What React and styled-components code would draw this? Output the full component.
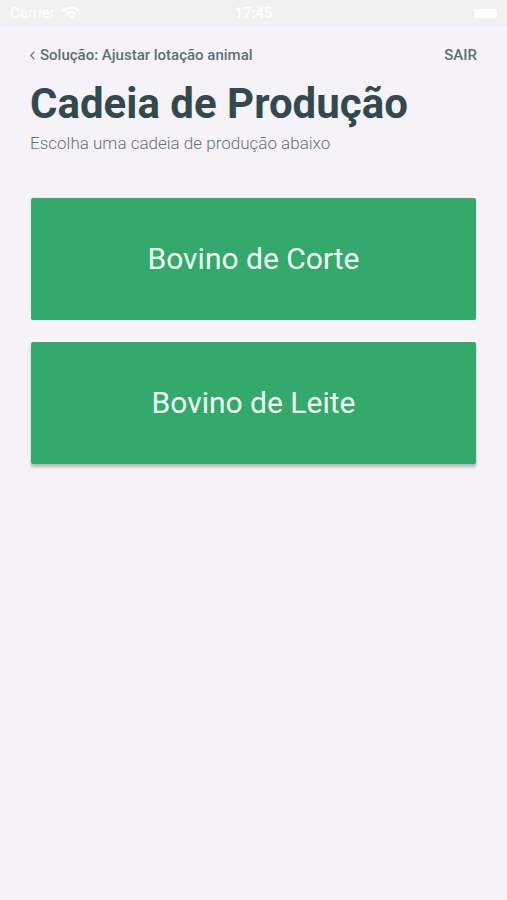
import styled, { createGlobalStyle } from "styled-components";

const chains = [
  { id: "corte", label: "Bovino de Corte", raised: false },
  { id: "leite", label: "Bovino de Leite", raised: true },
];

const App = () => {
  return (
    <>
      <GlobalStyle />
      <Screen>
        <StatusBar>
          <Carrier>
            Carrier
            <WifiIcon />
          </Carrier>
          <Clock>17:45</Clock>
          <Battery />
        </StatusBar>
        <Content>
          <NavRow>
            <NavLink href="#solucao">
              <BackIcon />
              Solução: Ajustar lotação animal
            </NavLink>
            <NavLink href="#sair">SAIR</NavLink>
          </NavRow>
          <Title>Cadeia de Produção</Title>
          <Subtitle>Escolha uma cadeia de produção abaixo</Subtitle>
          <ChainList>
            {chains.map((chain) => (
              <ChainButton key={chain.id} type="button" $raised={chain.raised}>
                {chain.label}
              </ChainButton>
            ))}
          </ChainList>
        </Content>
      </Screen>
    </>
  );
};

const WifiIcon = () => (
  <svg width="18" height="14" viewBox="0 0 18 14" aria-hidden="true">
    <g fill="none" stroke="#ffffff" strokeWidth="2.6">
      <path d="M1 5.2C5.4 0.6 12.6 0.6 17 5.2" />
      <path d="M4 8.4C6.8 5.6 11.2 5.6 14 8.4" />
    </g>
    <path d="M9 13.4L6.2 10.4C7.8 8.9 10.2 8.9 11.8 10.4Z" fill="#ffffff" />
  </svg>
);

const BackIcon = () => (
  <svg width="5" height="9" viewBox="0 0 5 9" aria-hidden="true">
    <path
      d="M4.4 0.6L0.8 4.5L4.4 8.4"
      fill="none"
      stroke="#5f7377"
      strokeWidth="1.2"
    />
  </svg>
);

const GlobalStyle = createGlobalStyle`
  * {
    box-sizing: border-box;
  }

  body {
    margin: 0;
    background: #f5f3f8;
    font-family: Roboto, "Liberation Sans", sans-serif;
  }
`;

const Screen = styled.div`
  min-height: 100vh;
  background: #f5f3f8;
`;

const StatusBar = styled.header`
  display: grid;
  grid-template-columns: 1fr auto 1fr;
  align-items: center;
  height: 26px;
  padding: 0 10px;
  background: #f1f1f1;
  color: #ffffff;
  font-size: 15px;
  line-height: 20px;
`;

const Carrier = styled.div`
  display: flex;
  align-items: center;
  gap: 7px;
`;

const Clock = styled.div`
  font-weight: 500;
`;

const Battery = styled.div`
  justify-self: end;
  width: 23px;
  height: 9px;
  border-radius: 2px;
  background: #ffffff;
`;

const Content = styled.main`
  padding: 19px 30px 30px;
`;

const NavRow = styled.nav`
  display: flex;
  justify-content: space-between;
  align-items: center;
`;

const NavLink = styled.a`
  display: flex;
  align-items: center;
  gap: 5px;
  color: #5a7175;
  font-size: 15px;
  font-weight: 500;
  line-height: 20px;
  text-decoration: none;
`;

const Title = styled.h1`
  margin: 14px 0 0;
  color: #34494e;
  font-size: 42px;
  font-weight: 700;
  line-height: 50px;
`;

const Subtitle = styled.p`
  margin: 4px 0 0;
  color: #6c7178;
  font-size: 17px;
  font-weight: 300;
  line-height: 20px;
`;

const ChainList = styled.div`
  display: flex;
  flex-direction: column;
  gap: 22px;
  margin-top: 45px;
  padding: 0 1px;
`;

const ChainButton = styled.button`
  width: 100%;
  height: 122px;
  padding: 0;
  border: 0;
  border-radius: 2px;
  background: #33a96b;
  color: #f1fff6;
  font-family: inherit;
  font-size: 30px;
  font-weight: 400;
  line-height: 36px;
  cursor: pointer;
  box-shadow: ${({ $raised }) =>
    $raised
      ? "0 3px 3px rgba(0, 0, 0, 0.25)"
      : "0 0 2px rgba(0, 0, 0, 0.12)"};
`;

export default App;
